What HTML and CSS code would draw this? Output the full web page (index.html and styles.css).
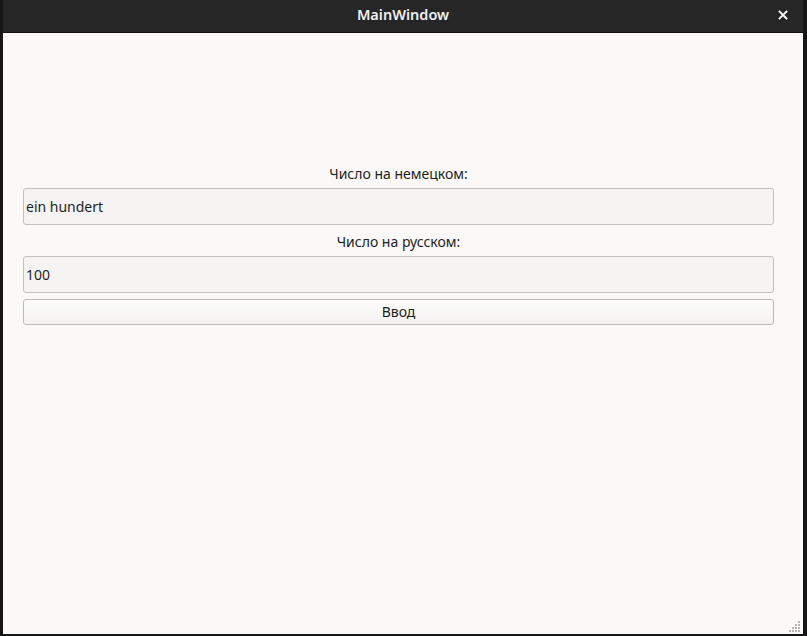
FILE: index.html
```html
<!DOCTYPE html>
<html>
<head>
<meta charset="utf-8">
<link rel="stylesheet" href="styles.css">
</head>
<body>
<div class="window">
  <div class="titlebar">
    <span class="title">MainWindow</span>
    <span class="close">
      <svg width="10" height="10" viewBox="0 0 10 10"><path d="M1.5 1.5 L8.5 8.5 M8.5 1.5 L1.5 8.5" stroke="#ffffff" stroke-width="1.8" stroke-linecap="square"/></svg>
    </span>
  </div>
  <div class="content">
    <div class="form">
      <div class="label">Число на немецком:</div>
      <div class="input">ein hundert</div>
      <div class="label">Число на русском:</div>
      <div class="input">100</div>
      <div class="button">Ввод</div>
    </div>
    <div class="grip">
      <svg width="12" height="12" viewBox="0 0 12 12" fill="#b8b6b2">
        <rect x="9" y="1" width="2" height="2"/>
        <rect x="6" y="4" width="2" height="2"/><rect x="9" y="4" width="2" height="2"/>
        <rect x="3" y="7" width="2" height="2"/><rect x="6" y="7" width="2" height="2"/><rect x="9" y="7" width="2" height="2"/>
        <rect x="0" y="10" width="2" height="2"/><rect x="3" y="10" width="2" height="2"/><rect x="6" y="10" width="2" height="2"/><rect x="9" y="10" width="2" height="2"/>
      </svg>
    </div>
  </div>
</div>
</body>
</html>
```
FILE: styles.css
```css
html, body {
  margin: 0;
  padding: 0;
  background: #161616;
  width: 807px;
  height: 636px;
  overflow: hidden;
}
.window {
  margin-left: 3px;
  width: 800px;
  height: 634px;
  display: flex;
  flex-direction: column;
  font-family: "Noto Sans", "Open Sans", sans-serif;
}
.titlebar {
  height: 33px;
  box-sizing: border-box;
  padding-bottom: 5px;
  flex: none;
  background: #262626;
  border-bottom: 1px solid #111;
  display: flex;
  align-items: center;
  justify-content: center;
  position: relative;
}
.title {
  color: #f0f0f0;
  font-size: 14.5px;
  font-weight: 600;
}
.close {
  position: absolute;
  right: 15px;
  top: 10px;
  display: flex;
}
.content {
  flex: 1;
  background: #faf9f7;
  position: relative;
  padding: 130px 29px 0 20px;
}
.form {
  display: flex;
  flex-direction: column;
  color: #1e1e1e;
  font-size: 14px;
}
.label {
  text-align: center;
  height: 21px;
  line-height: 21px;
  margin-bottom: 4px;
}
.input {
  height: 35px;
  line-height: 35px;
  background: #f5f4f2;
  border: 1px solid #c4c1bc;
  border-radius: 3px;
  padding-left: 2px;
  margin-bottom: 6px;
}
.button {
  height: 24px;
  line-height: 24px;
  text-align: center;
  border: 1px solid #bdbab5;
  border-radius: 3px;
  background: linear-gradient(#fdfdfc, #f3f2f0);
}
.grip {
  position: absolute;
  right: 2px;
  bottom: 2px;
  display: flex;
}
```
